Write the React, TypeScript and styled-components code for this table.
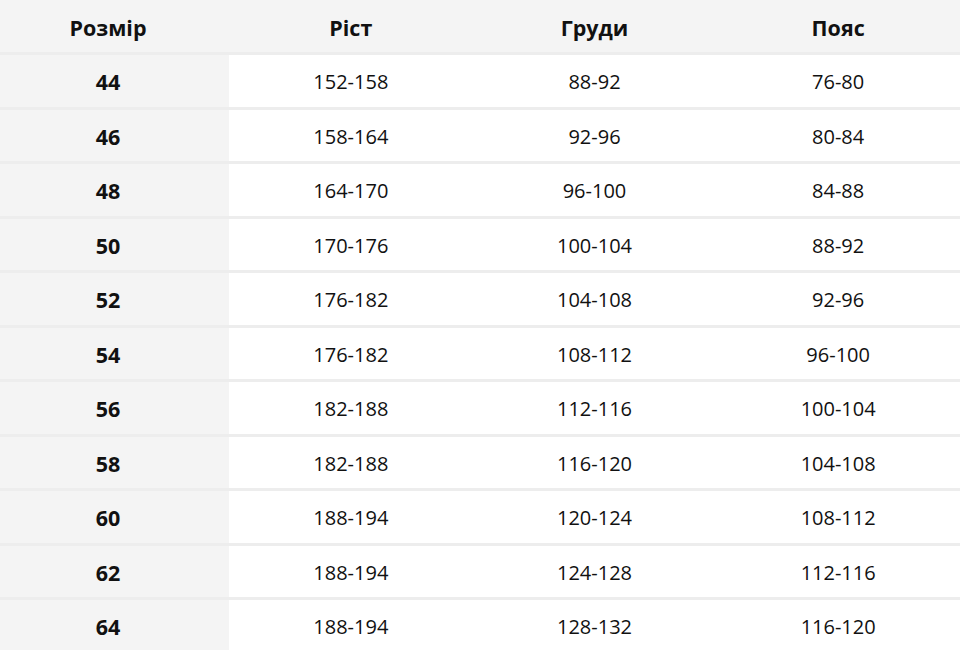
import React from "react";
import styled, { createGlobalStyle } from "styled-components";

const Global = createGlobalStyle`
  html, body { margin: 0; padding: 0; background: #ffffff; }
  body { font-family: "Open Sans", "Noto Sans", sans-serif; color: #111111; }
`;

const Table = styled.div`
  width: 960px;
  display: grid;
  grid-template-columns: 229px repeat(3, 1fr);
  grid-auto-rows: 51.5px;
  grid-template-rows: 52px;
  row-gap: 3px;
  background: #ededed;
`;

const Cell = styled.div<{ $head?: boolean; $first?: boolean }>`
  display: flex;
  align-items: center;
  justify-content: center;
  padding-top: 2px;
  box-sizing: border-box;
  font-size: ${(p) => (p.$head || p.$first ? "21.5px" : "20px")};
  font-weight: ${(p) => (p.$head || p.$first ? 700 : 400)};
  background: ${(p) => (p.$head || p.$first ? "#f4f4f4" : "#ffffff")};
  padding-right: ${(p) => (p.$first ? "13px" : "0")};
`;

const headers = ["Розмір", "Ріст", "Груди", "Пояс"];
const rows: string[][] = [
  ["44", "152-158", "88-92", "76-80"],
  ["46", "158-164", "92-96", "80-84"],
  ["48", "164-170", "96-100", "84-88"],
  ["50", "170-176", "100-104", "88-92"],
  ["52", "176-182", "104-108", "92-96"],
  ["54", "176-182", "108-112", "96-100"],
  ["56", "182-188", "112-116", "100-104"],
  ["58", "182-188", "116-120", "104-108"],
  ["60", "188-194", "120-124", "108-112"],
  ["62", "188-194", "124-128", "112-116"],
  ["64", "188-194", "128-132", "116-120"],
];

export default function App() {
  return (
    <>
      <Global />
      <Table>
        {headers.map((h, i) => (
          <Cell key={h} $head $first={i === 0}>
            {h}
          </Cell>
        ))}
        {rows.map((r) =>
          r.map((v, i) => (
            <Cell key={r[0] + "-" + i} $first={i === 0}>
              {v}
            </Cell>
          ))
        )}
      </Table>
    </>
  );
}
